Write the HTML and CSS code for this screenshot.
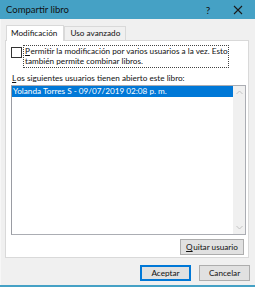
FILE: index.html
```html
<!DOCTYPE html>
<html lang="es">
<head>
  <meta charset="UTF-8">
  <meta name="viewport" content="width=device-width, initial-scale=1">
  <title>Compartir libro</title>
  <link rel="stylesheet" href="styles.css">
</head>
<body>
  <div class="dialog">
    <div class="titlebar">
      <span class="title">Compartir libro</span>
      <span class="help">?</span>
      <span class="close">
        <svg width="10" height="10" viewBox="0 0 10 10"><path d="M1 1 L9 9 M9 1 L1 9" stroke="#1a1a1a" stroke-width="1.1" fill="none"/></svg>
      </span>
    </div>

    <div class="content">
      <div class="tabs">
        <div class="tab active">Modificación</div>
        <div class="tab">Uso avanzado</div>
      </div>

      <div class="panel">
        <div class="check-row">
          <span class="checkbox"></span>
          <label class="check-label">
            <span class="line"><span class="key">P</span>ermitir la modificación por varios usuarios a la vez. Esto</span>
            <span class="line">también permite combinar libros.</span>
          </label>
        </div>

        <div class="list-label"><span class="key">L</span>os siguientes usuarios tienen abierto este libro:</div>

        <div class="listbox">
          <div class="items">
            <div class="item selected">Yolanda Torres S - 09/07/2019 02:08 p. m.</div>
          </div>
          <div class="scrollbar">
            <svg width="7" height="5" viewBox="0 0 7 5"><path d="M0.5 4 L3.5 1 L6.5 4" stroke="#c2c2c2" fill="none"/></svg>
            <svg width="7" height="5" viewBox="0 0 7 5"><path d="M0.5 1 L3.5 4 L6.5 1" stroke="#c2c2c2" fill="none"/></svg>
          </div>
        </div>

        <div class="panel-actions">
          <button class="btn"><span class="key">Q</span>uitar usuario</button>
        </div>
      </div>

      <div class="footer">
        <button class="btn default">Aceptar</button>
        <button class="btn">Cancelar</button>
      </div>
    </div>
  </div>
</body>
</html>
```

FILE: styles.css
```css
body {
  margin: 0;
  font-family: Lato, "Open Sans", sans-serif;
  font-size: 8.2px;
  color: #111;
}
.dialog {
  width: 255px;
  height: 287px;
  background-color: #f0f0f0;
  border-bottom: 2px solid #45a1c5;
  box-sizing: border-box;
  display: flex;
  flex-direction: column;
}
.titlebar {
  height: 19px;
  background-color: #45a1c5;
  display: flex;
  align-items: center;
  padding-left: 6px;
}
.title {
  flex: 1;
  font-size: 9.5px;
  color: #111;
}
.help {
  width: 30px;
  font-size: 10px;
  text-align: center;
}
.close {
  width: 30px;
  display: flex;
  justify-content: center;
  margin-right: 2px;
}
.content {
  flex: 1;
  padding: 6px 6px 0 4px;
  border-left: 1px solid #f7f7f7;
}
.tabs {
  display: flex;
  align-items: flex-end;
  padding-left: 1px;
  height: 15px;
}
.tab {
  height: 13px;
  line-height: 13px;
  padding: 0 5px;
  border: 1px solid #d9d9d9;
  border-bottom: none;
  background-color: #f0f0f0;
}
.tab.active {
  height: 15px;
  line-height: 15px;
  background-color: #fff;
  margin-bottom: -1px;
  position: relative;
  z-index: 1;
  padding: 0 6px 0 4px;
}
.panel {
  height: 218px;
  box-sizing: border-box;
  background-color: #fff;
  border: 1px solid #d9d9d9;
  padding: 4px 4px 0 5px;
}
.key {
  text-decoration: underline;
  margin-right: 0.5px;
}
.check-row {
  display: flex;
  align-items: flex-start;
}
.checkbox {
  width: 9px;
  height: 9px;
  border: 1px solid #333;
  margin-top: 2px;
  flex: none;
}
.check-label {
  width: 203px;
  margin-left: 1px;
  padding: 0 0 1px 1px;
  border: 1px dotted #444;
  line-height: 10px;
}
.line {
  display: block;
  white-space: nowrap;
}
.list-label {
  margin-top: 5px;
  line-height: 10px;
  padding-left: 1px;
}
.listbox {
  margin-top: 2px;
  width: 235px;
  height: 150px;
  box-sizing: border-box;
  border: 1px solid #abadb3;
  border-left-color: #9a9ca3;
  display: flex;
}
.items {
  flex: 1;
}
.item {
  height: 11px;
  line-height: 11px;
  padding-left: 1px;
  color: #fff;
}
.item.selected {
  background-color: #0078d7;
}
.scrollbar {
  width: 12px;
  background-color: #f0f0f0;
  display: flex;
  flex-direction: column;
  justify-content: space-between;
  align-items: center;
  padding: 4px 0;
}
.panel-actions {
  display: flex;
  justify-content: flex-end;
  margin-top: 4px;
}
.btn {
  font-family: inherit;
  font-size: 8.2px;
  color: #111;
  background-color: #e1e1e1;
  border: 1px solid #adadad;
  height: 16px;
  padding: 0;
  margin: 0;
}
.panel-actions .btn {
  width: 64px;
}
.footer {
  display: flex;
  justify-content: flex-end;
  gap: 8px;
  margin-top: 7px;
  margin-right: -1px;
}
.footer .btn {
  width: 51px;
}
.btn.default {
  border: 1px solid #0078d7;
  box-shadow: inset 0 0 0 1px #0078d7;
}
```
